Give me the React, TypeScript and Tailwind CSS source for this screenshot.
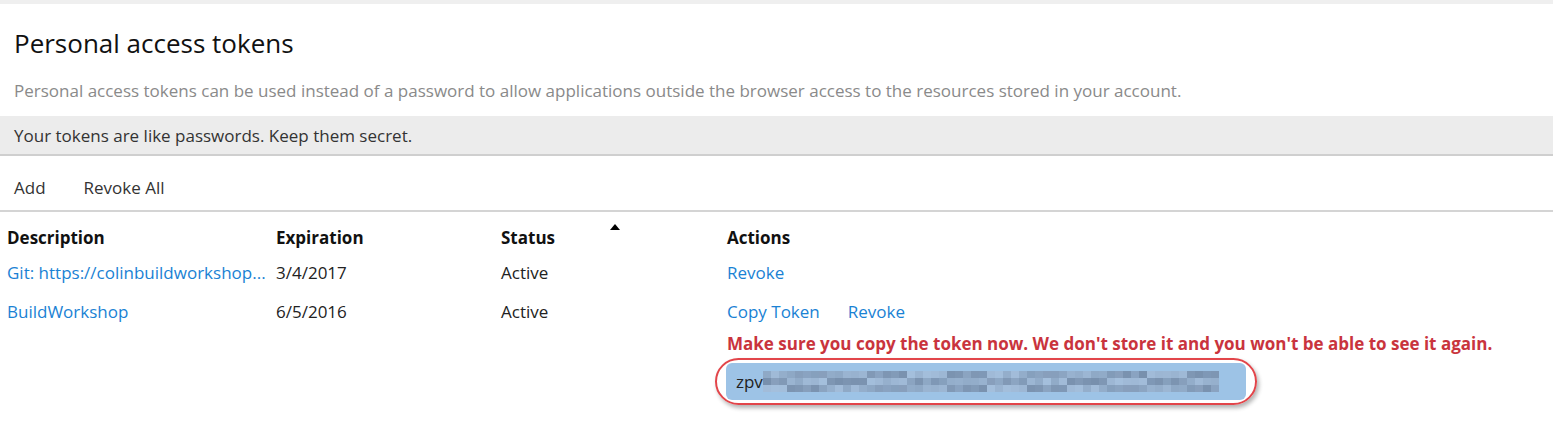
const blurCells = [
  "#8fa9c6", "#7f98b6", "#a4bfdc", "#8aa3c1", "#93adca", "#7b93b0", "#9ab4d1", "#8ca5c2",
  "#a0bad7", "#7e96b3", "#91abc8", "#86a0bd", "#a3bedb", "#7890ad", "#98b2cf", "#8ba4c1",
  "#9fb9d6", "#829bb8", "#94aecb", "#7c94b1", "#a1bbd8", "#889fbc", "#96b0cd", "#7f97b4",
  "#9cb6d3", "#8ea8c5", "#a2bcd9", "#7a92af", "#92acc9", "#879fbc", "#9db7d4", "#8199b6",
];

function TokenBlur() {
  const cols = 57;
  const rows = 3;
  const cw = 8;
  const ch = 7;
  return (
    <svg width={cols * cw} height={rows * ch} className="block">
      {Array.from({ length: rows }).map((_, r) =>
        Array.from({ length: cols }).map((_, c) => (
          <rect
            key={`${r}-${c}`}
            x={c * cw}
            y={r * ch}
            width={cw}
            height={ch}
            fill={blurCells[(c * 7 + r * 13 + ((c * c) % 5)) % blurCells.length]}
          />
        ))
      )}
    </svg>
  );
}

const cols = "grid grid-cols-[269px_225px_226px_1fr]";

export default function App() {
  return (
    <div className="w-[1553px] h-[430px] bg-white overflow-hidden font-['Open_Sans',sans-serif] text-[17px] text-[#222]">
      <div className="h-[4px] bg-[#efefef]" />
      <h1 className="pl-[14px] pt-[21px] text-[26px] leading-[36px] text-[#111]">
        Personal access tokens
      </h1>
      <p className="pl-[14px] pt-[18px] leading-[24px] text-[#8a8a8a]">
        Personal access tokens can be used instead of a password to allow applications outside the browser access to the resources stored in your account.
      </p>
      <div className="mt-[13px] h-[40px] bg-[#ececec] border-b-2 border-[#cfcfcf] pl-[14px] pt-[2px] flex items-center text-[#333]">
        Your tokens are like passwords. Keep them secret.
      </div>
      <div className="h-[56px] border-b-2 border-[#d4d4d4] pl-[14px] pt-[10px] flex items-center gap-[38px] text-[#333]">
        <span>Add</span>
        <span>Revoke All</span>
      </div>
      <div className="pl-[7px] leading-[24px]">
        <div className={`${cols} h-[38px] items-end font-bold text-[#111]`}>
          <span>Description</span>
          <span>Expiration</span>
          <span className="relative h-full flex items-end">
            Status
            <span className="absolute left-[109px] top-[12px] w-0 h-0 border-l-[5px] border-r-[5px] border-b-[6px] border-l-transparent border-r-transparent border-b-black" />
          </span>
          <span>Actions</span>
        </div>
        <div className={`${cols} h-[35px] items-end`}>
          <span className="text-[#1a82d4] truncate pr-[4px]">Git: https://colinbuildworkshop...</span>
          <span>3/4/2017</span>
          <span>Active</span>
          <span className="text-[#1a82d4]">Revoke</span>
        </div>
        <div className={`${cols} h-[39px] items-end`}>
          <span className="text-[#1a82d4]">BuildWorkshop</span>
          <span>6/5/2016</span>
          <span>Active</span>
          <span className="flex gap-[28px] text-[#1a82d4]">
            <span>Copy Token</span>
            <span>Revoke</span>
          </span>
        </div>
        <div className={cols}>
          <span />
          <span />
          <span />
          <div className="flex flex-col items-start">
            <span className="mt-[10px] font-bold text-[#c9343d] leading-[20px]">
              Make sure you copy the token now. We don't store it and you won't be able to see it again.
            </span>
            <div className="mt-[4px] -ml-[12px] rounded-full border-[2.5px] border-[#e2454a] px-[9px] py-[3px] shadow-[2px_3px_4px_rgba(0,0,0,0.3)]">
              <div className="w-[520px] h-[37px] bg-[#9dc3e6] rounded-[6px] flex items-center pl-[10px] text-[#222]">
                <span>zpv</span>
                <TokenBlur />
              </div>
            </div>
          </div>
        </div>
      </div>
    </div>
  );
}
